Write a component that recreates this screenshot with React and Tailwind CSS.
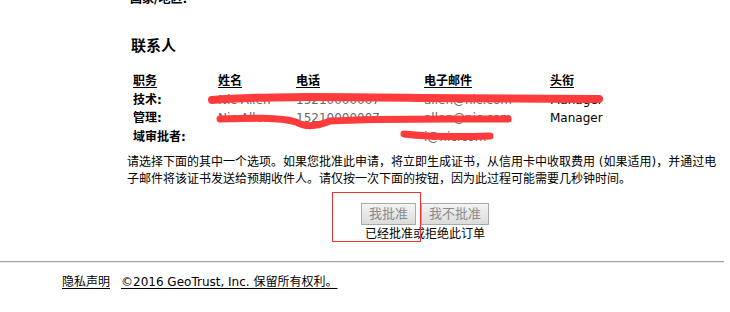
import React from 'react';

const contacts = [
  { role: '技术:', name: 'Nic Allen', phone: '15210000007', email: 'allen@nic.com', title: 'Manager' },
  { role: '管理:', name: 'Nic Allen', phone: '15210000007', email: 'allen@nic.com', title: 'Manager' },
  { role: '域审批者:', name: '', phone: '', email: 'i@nic.com', title: '' },
];

const headers = ['职务', '姓名', '电话', '电子邮件', '头衔'];

// red marker strokes that hide the personal data in the screenshot
function Scribbles() {
  return (
    <svg className="absolute left-0 top-0 pointer-events-none" width="730" height="312" viewBox="0 0 730 312">
      <g fill="none" stroke="#ff3b3b" strokeLinecap="round" strokeLinejoin="round">
        <path d="M212 100 C 260 96, 330 97, 420 98 S 560 99, 599 99" strokeWidth="8" />
        <path d="M220 119 C 250 118, 280 117, 296 122 C 306 128, 318 126, 330 121 C 380 118, 450 119, 508 119" strokeWidth="7" />
        <path d="M404 134 C 430 137, 460 137, 490 136" strokeWidth="7" />
      </g>
    </svg>
  );
}

export default function App() {
  return (
    <div className="relative w-[730px] h-[312px] overflow-hidden bg-white text-black font-['DejaVu_Sans','Noto_Sans_CJK_SC',sans-serif]">
      <div className="mt-[-9px] pl-[130px] text-[12px] leading-[16px] font-bold">国家/地区:</div>

      <h3 className="mt-[29px] pl-[131px] text-[15px] leading-[20px] font-bold">联系人</h3>

      <div className="mt-[16px] ml-[133px] grid grid-cols-[85px_78px_128px_126px_auto] text-[12px]">
        {headers.map((h) => (
          <div key={h} className="h-[18.5px] leading-[18.5px] font-bold underline underline-offset-2">{h}</div>
        ))}
        {contacts.map((c) => (
          <React.Fragment key={c.role}>
            <div className="h-[18.5px] leading-[18.5px] font-bold">{c.role}</div>
            <div className="h-[18.5px] leading-[18.5px] text-[#666]">{c.name}</div>
            <div className="h-[18.5px] leading-[18.5px] text-[#666]">{c.phone}</div>
            <div className="h-[18.5px] leading-[18.5px] text-[#666]">{c.email}</div>
            <div className="h-[18.5px] leading-[18.5px]">{c.title}</div>
          </React.Fragment>
        ))}
      </div>

      <div className="ml-[127px] w-[596px]">
        <p className="mt-[8px] text-[12px] leading-[17px] whitespace-nowrap">
          请选择下面的其中一个选项。如果您批准此申请，将立即生成证书，从信用卡中收取费用 (如果适用)，并通过电
          <br />
          子邮件将该证书发送给预期收件人。请仅按一次下面的按钮，因为此过程可能需要几秒钟时间。
        </p>

        <div className="mt-[15px] flex justify-center gap-[5px]">
          <button disabled className="h-[22px] px-[7px] border border-[#a9a9a9] bg-gradient-to-b from-[#f3f3f3] to-[#dcdcdc] text-[13px] leading-[20px] text-[#8a8a8a]">我批准</button>
          <button disabled className="h-[22px] px-[7px] border border-[#a9a9a9] bg-gradient-to-b from-[#f3f3f3] to-[#dcdcdc] text-[13px] leading-[20px] text-[#8a8a8a]">我不批准</button>
        </div>
        <p className="mt-[2px] text-center text-[12px] leading-[14px]">已经批准或拒绝此订单</p>
      </div>

      <div className="mt-[20px] w-[724px] h-[1px] bg-[#a0a0a0]" />
      <div className="h-[1px] w-[724px] bg-[#ececec]" />

      <div className="mt-[11px] pl-[62px] flex gap-[11px] text-[12px] leading-[16px]">
        <a href="#" className="underline underline-offset-2">隐私声明</a>
        <a href="#" className="underline underline-offset-2">©2016 GeoTrust, Inc. 保留所有权利。</a>
      </div>

      {/* highlight box drawn over the approve button */}
      <div className="absolute left-[332px] top-[192px] w-[89px] h-[50px] border border-[#ee3333] pointer-events-none" />

      <Scribbles />
    </div>
  );
}
